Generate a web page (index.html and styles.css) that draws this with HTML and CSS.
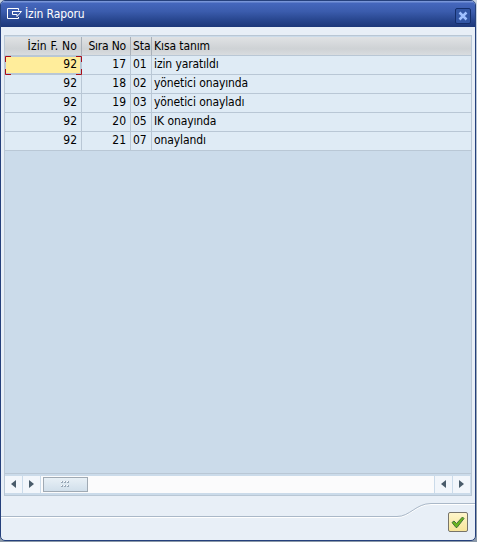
FILE: index.html
```html
<!DOCTYPE html>
<html lang="tr">
<head>
<meta charset="utf-8">
<title>İzin Raporu</title>
<link rel="stylesheet" href="styles.css">
</head>
<body>
<div class="window">
  <header class="titlebar">
    <svg class="app-icon" width="16" height="12" viewBox="0 0 16 12"><path d="M11.500 2.500V.5H.5v10h11V9M5 3.500h9.500L10 8.500V6.500H5.500V3.500" fill="none" stroke="#fff"/></svg>
    <h1>İzin Raporu</h1>
    <button class="close" aria-label="Kapat"><svg width="10" height="10" viewBox="0 0 10 10"><path d="M1.500 1.500L8.500 8.500M8.500 1.500L1.500 8.500" stroke="#9fc0ff" stroke-width="2.500"/></svg></button>
  </header>
  <main class="grid">
    <table>
      <colgroup><col class="c-form"><col class="c-order"><col class="c-status"><col></colgroup>
      <thead><tr><th class="num h-form">İzin F. No</th><th class="num h-order">Sıra No</th><th>Sta</th><th>Kısa tanım</th></tr></thead>
      <tbody>
        <tr><td class="num selected">92<svg class="marks" width="77" height="19" viewBox="0 0 77 19"><path d="M.5 6V.5H6M71 .5h5.500V6M.5 13v5.500H6M71 18.500h5.500V13" fill="none" stroke="#a80c18"/></svg></td><td class="num">17</td><td>01</td><td>izin yaratıldı</td></tr>
        <tr><td class="num">92</td><td class="num">18</td><td>02</td><td>yönetici onayında</td></tr>
        <tr><td class="num">92</td><td class="num">19</td><td>03</td><td>yönetici onayladı</td></tr>
        <tr><td class="num">92</td><td class="num">20</td><td>05</td><td>IK onayında</td></tr>
        <tr><td class="num">92</td><td class="num">21</td><td>07</td><td>onaylandı</td></tr>
      </tbody>
    </table>
    <div class="scrollbar">
      <span class="arrow"><svg width="5" height="8" viewBox="0 0 5 8"><path d="M5 0v8L0 4z"/></svg></span>
      <span class="arrow"><svg width="5" height="8" viewBox="0 0 5 8"><path d="M0 0v8l5-4z"/></svg></span>
      <div class="track"><div class="thumb"><svg width="9" height="7" viewBox="0 0 9 7"><path d="M0 1h2M3 1h2M6 1h2M0 5h2M3 5h2M6 5h2" stroke="#9aa9b8" stroke-width="2"/><path d="M0 .5h1M3 .5h1M6 .5h1M0 4.500h1M3 4.500h1M6 4.500h1" stroke="#fff"/></svg></div></div>
      <span class="arrow"><svg width="5" height="8" viewBox="0 0 5 8"><path d="M5 0v8L0 4z"/></svg></span>
      <span class="arrow"><svg width="5" height="8" viewBox="0 0 5 8"><path d="M0 0v8l5-4z"/></svg></span>
    </div>
  </main>
  <footer class="footer">
    <svg class="curve" width="474" height="18" viewBox="0 0 474 18"><path d="M0 14.500H396C409 14.500 415 1.500 430 1.500H474" fill="none" stroke="#fff"/><path d="M0 13.500H396C409 13.500 415 .5 430 .5H474" fill="none" stroke="#aab8c8"/></svg>
    <button class="confirm" aria-label="Tamam"><svg width="14" height="13" viewBox="0 0 14 13"><path d="M1 6.500L3 5l2.500 2.500L11.500 1 13 2.500 6 11.500H5z" fill="#6cb51d" stroke="#43733b"/></svg></button>
  </footer>
</div>
</body>
</html>
```
FILE: styles.css
```css
* { box-sizing: border-box; }
body {
  margin: 0;
  width: 477px;
  height: 542px;
  overflow: hidden;
  background: linear-gradient(#c9d4e2, #8b99a9);
  font: 12px/18px "DejaVu Sans Condensed", "DejaVu Sans", sans-serif;
  color: #000;
}
button { padding: 0; display: flex; align-items: center; justify-content: center; }
.window {
  width: 476px;
  height: 541px;
  display: flex;
  flex-direction: column;
  border: 1px solid #25407c;
  border-radius: 5px;
  background: #e8eff7;
  overflow: hidden;
}
.titlebar {
  height: 26px;
  flex: none;
  display: flex;
  align-items: center;
  padding: 0 4px 0 6px;
  background: linear-gradient(#7895d8 0 1px, #4567bd 2px, #3b5cad 40%, #27458d 75%, #1c3779);
}
.app-icon { margin-top: 0; }
h1 {
  margin: 0 0 0 2px;
  font-size: 12px;
  font-weight: normal;
  letter-spacing: -.1px;
  color: #fff;
}
.close {
  width: 16px;
  height: 16px;
  margin: 3px 0 0 auto;
  border: 1px solid #142e6c;
  border-radius: 2px;
  background: #3256a5;
}
.grid {
  width: 468px;
  height: 461px;
  flex: none;
  margin: 8px 0 0 3px;
  display: flex;
  flex-direction: column;
  border: 1px solid #b9c7d5;
  background: #cbdbea;
}
table {
  width: 466px;
  margin-top: 1px;
  table-layout: fixed;
  border-collapse: separate;
  border-spacing: 0;
}
.c-form { width: 77px; }
.c-order { width: 49px; }
.c-status { width: 21px; }
th, td {
  height: 19px;
  padding: 0 0 1px 2px;
  border-right: 1px solid #b9c7d5;
  border-bottom: 1px solid #b9c7d5;
  font-weight: normal;
  line-height: 17px;
  text-align: left;
  white-space: nowrap;
  overflow: hidden;
  letter-spacing: -.1px;
}
tr > :last-child { border-right: 0; }
th {
  padding: 1px 0 0 2px;
  border-right-color: #a9b0b8;
  background: linear-gradient(#e0e2e4, #ced2d5 65%, #d9dcdf);
}
td { background: #dfebf5; }
.num { text-align: right; padding-right: 4px; letter-spacing: 0; }
.h-form { letter-spacing: .15px; }
.h-order { letter-spacing: -.2px; }
.selected {
  position: relative;
  overflow: visible;
  background: #ffed9b;
  box-shadow: inset 1px 1px #b9c7d5, inset -1px -1px #b9c7d5;
}
.marks { position: absolute; left: 0; top: 0; }
.scrollbar {
  height: 22px;
  margin-top: auto;
  padding: 2px 0;
  display: flex;
  border-top: 1px solid #b9c7d5;
}
.arrow {
  width: 18px;
  padding-bottom: 2px;
  display: flex;
  align-items: center;
  justify-content: center;
  border-right: 1px solid #cbdbea;
  background: #f2f6fb;
  fill: #4a5c6b;
}
.track {
  flex: 1;
  padding: 1px 0 1px 2px;
  border-right: 1px solid #cbdbea;
  background: #fbfbfc;
}
.thumb {
  width: 45px;
  height: 15px;
  display: flex;
  align-items: center;
  justify-content: center;
  border: 1px solid #a0aab4;
  background: linear-gradient(#e8f0f6, #d1dfeb);
}
.footer {
  flex: 1;
  margin-top: 7px;
  display: grid;
}
.curve { grid-area: 1 / 1; display: block; }
.confirm {
  grid-area: 1 / 1;
  justify-self: end;
  width: 20px;
  height: 20px;
  margin: 9px 7px 0 0;
  border: 1px solid #77746a;
  border-radius: 2px;
  background: linear-gradient(#fff6cb, #f7e59a);
}
```
